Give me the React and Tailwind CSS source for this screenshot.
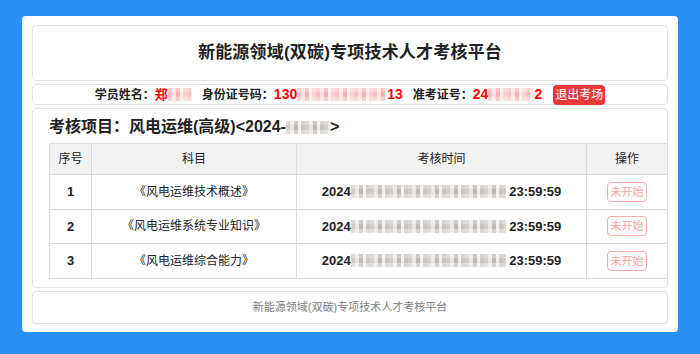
import React from 'react';

const rows = [
  { no: 1, name: '《风电运维技术概述》' },
  { no: 2, name: '《风电运维系统专业知识》' },
  { no: 3, name: '《风电运维综合能力》' },
];

// mosaic patch where the original screenshot was pixelated
function Mosaic({ w, tone = 'red' }) {
  return (
    <span
      aria-hidden="true"
      className={`inline-block h-[13px] align-[-2px] ${
        tone === 'red'
          ? 'bg-[linear-gradient(0deg,rgba(255,255,255,0.35)_0_4px,transparent_4px_9px,rgba(255,255,255,0.25)_9px),repeating-linear-gradient(90deg,#f9c2c2_0_4px,#fde2e2_4px_8px,#f7b0b0_8px_12px,#feecec_12px_15px,#fad0d0_15px_19px)]'
          : 'bg-[linear-gradient(0deg,rgba(255,255,255,0.35)_0_4px,transparent_4px_9px,rgba(255,255,255,0.25)_9px),repeating-linear-gradient(90deg,#d2ceca_0_4px,#e9e6e3_4px_8px,#bdb9b5_8px_12px,#f1efed_12px_15px,#c9c5c1_15px_19px)]'
      }`}
      style={{ width: w }}
    />
  );
}

export default function App() {
  return (
    <div className="min-h-[354px] bg-[#2b90f6] px-[22px] pt-[16px] pb-[22px] font-['Liberation_Sans','Noto_Sans_CJK_SC',sans-serif] text-[#222]">
      <div className="flex flex-col gap-[3px] rounded bg-white px-[10px] pt-[9px] pb-[8px]">
        {/* header */}
        <div className="flex h-[56px] items-center justify-center rounded border border-[#e2e2e2]">
          <h1 className="text-[17px] font-bold tracking-[0.2px] text-[#222]">新能源领域(双碳)专项技术人才考核平台</h1>
        </div>

        {/* student info */}
        <div className="flex h-[21px] items-center justify-center whitespace-nowrap rounded border border-[#e2e2e2] text-[12px] font-bold">
          <span>学员姓名：</span>
          <span className="text-[13px] text-[#f00]">郑</span>
          <Mosaic w={24} />
          <span className="ml-[10px]">身份证号码：</span>
          <span className="text-[14px] text-[#f00]">130</span>
          <Mosaic w={90} />
          <span className="text-[14px] text-[#f00]">13</span>
          <span className="ml-[10px]">准考证号：</span>
          <span className="text-[14px] text-[#f00]">24</span>
          <Mosaic w={46} />
          <span className="text-[14px] text-[#f00]">2</span>
          <button className="ml-[11px] h-[20px] rounded-[4px] bg-[#e8383a] px-[2px] text-[12px] font-normal leading-[20px] text-white">
            退出考场
          </button>
        </div>

        {/* exam table */}
        <div className="rounded border border-[#e2e2e2] pl-[16px] pt-[8px] pb-[8px]">
          <h2 className="mb-[6px] flex h-[20px] items-center whitespace-nowrap text-[16px] font-bold">
            考核项目：风电运维(高级)&lt;2024-<Mosaic w={44} tone="gray" />&gt;
          </h2>
          <table className="w-full border-collapse text-[13px]">
            <thead>
              <tr className="h-[31px] bg-[#f2f2f2] text-[12px]">
                <th className="w-[42px] border border-[#dcdcdc] font-normal">序号</th>
                <th className="w-[205px] border border-[#dcdcdc] font-normal">科目</th>
                <th className="w-[290px] border border-[#dcdcdc] font-normal">考核时间</th>
                <th className="border border-[#dcdcdc] border-r-0 font-normal">操作</th>
              </tr>
            </thead>
            <tbody>
              {rows.map((r) => (
                <tr key={r.no} className="h-[34.6px]">
                  <td className="border border-[#dcdcdc] text-center font-bold">{r.no}</td>
                  <td className="border border-[#dcdcdc] text-center text-[12px]">{r.name}</td>
                  <td className="whitespace-nowrap border border-[#dcdcdc] text-center font-bold">
                    2024<Mosaic w={155} tone="gray" /> 23:59:59
                  </td>
                  <td className="border border-[#dcdcdc] border-r-0 text-center">
                    <span className="inline-block h-[20px] w-[40px] rounded-[4px] border border-[#f9aaaa] text-[11px] leading-[18px] text-[#f9a0a0]">
                      未开始
                    </span>
                  </td>
                </tr>
              ))}
            </tbody>
          </table>
        </div>

        {/* footer */}
        <div className="flex h-[33px] items-center justify-center rounded border border-[#e2e2e2] text-[11px] text-[#808080]">
          新能源领域(双碳)专项技术人才考核平台
        </div>
      </div>
    </div>
  );
}
